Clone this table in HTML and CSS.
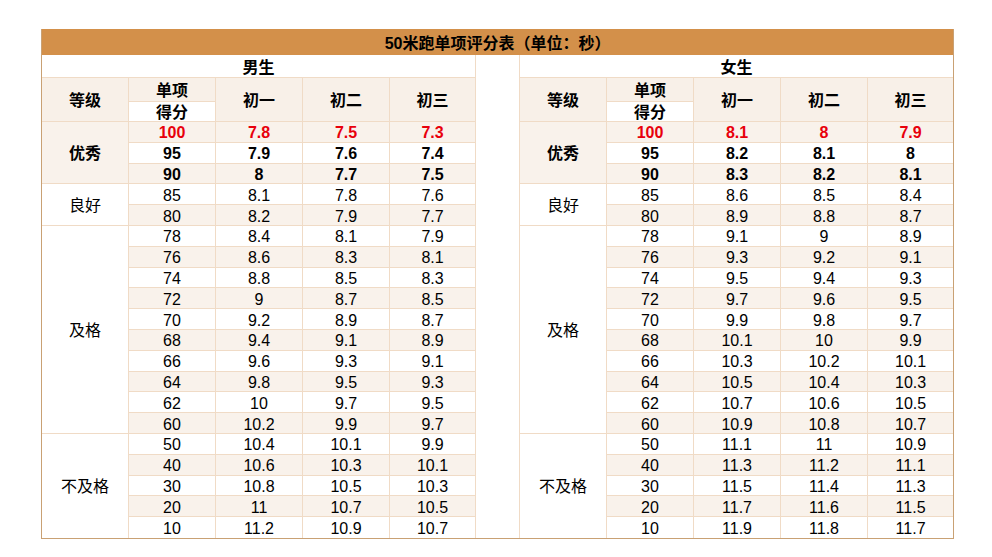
FILE: index.html
```html
<!DOCTYPE html>
<html lang="zh">
<head>
<meta charset="utf-8">
<title>50米跑单项评分表</title>
<link rel="stylesheet" href="styles.css">
</head>
<body>
<table class="score">
  <colgroup>
    <col class="c"><col class="c"><col class="c"><col class="c"><col class="c5">
    <col class="gapc">
    <col class="c"><col class="c"><col class="c"><col class="c"><col class="c6">
  </colgroup>
  <tr class="title"><th colspan="11" class="lastc">50米跑单项评分表（单位：秒）</th></tr>
  <tr class="gender"><th colspan="5">男生</th><td class="gap" rowspan="23"></td><th colspan="5" class="lastc">女生</th></tr>
  <tr class="head1">
    <th rowspan="2" class="hd">等级</th><th class="hd">单项</th><th rowspan="2" class="hd">初一</th><th rowspan="2" class="hd">初二</th><th rowspan="2" class="hd">初三</th>
    <th rowspan="2" class="hd">等级</th><th class="hd">单项</th><th rowspan="2" class="hd">初一</th><th rowspan="2" class="hd">初二</th><th rowspan="2" class="hd lastc">初三</th>
  </tr>
  <tr class="head2"><th>得分</th><th>得分</th></tr>

  <tr class="r odd top red"><th rowspan="3" class="grade best">优秀</th><td>100</td><td>7.8</td><td>7.5</td><td>7.3</td><th rowspan="3" class="grade best">优秀</th><td>100</td><td>8.1</td><td>8</td><td class="lastc">7.9</td></tr>
  <tr class="r top"><td>95</td><td>7.9</td><td>7.6</td><td>7.4</td><td>95</td><td>8.2</td><td>8.1</td><td class="lastc">8</td></tr>
  <tr class="r odd top"><td>90</td><td>8</td><td>7.7</td><td>7.5</td><td>90</td><td>8.3</td><td>8.2</td><td class="lastc">8.1</td></tr>

  <tr class="r"><th rowspan="2" class="grade">良好</th><td>85</td><td>8.1</td><td>7.8</td><td>7.6</td><th rowspan="2" class="grade">良好</th><td>85</td><td>8.6</td><td>8.5</td><td class="lastc">8.4</td></tr>
  <tr class="r odd"><td>80</td><td>8.2</td><td>7.9</td><td>7.7</td><td>80</td><td>8.9</td><td>8.8</td><td class="lastc">8.7</td></tr>

  <tr class="r"><th rowspan="10" class="grade">及格</th><td>78</td><td>8.4</td><td>8.1</td><td>7.9</td><th rowspan="10" class="grade">及格</th><td>78</td><td>9.1</td><td>9</td><td class="lastc">8.9</td></tr>
  <tr class="r odd"><td>76</td><td>8.6</td><td>8.3</td><td>8.1</td><td>76</td><td>9.3</td><td>9.2</td><td class="lastc">9.1</td></tr>
  <tr class="r"><td>74</td><td>8.8</td><td>8.5</td><td>8.3</td><td>74</td><td>9.5</td><td>9.4</td><td class="lastc">9.3</td></tr>
  <tr class="r odd"><td>72</td><td>9</td><td>8.7</td><td>8.5</td><td>72</td><td>9.7</td><td>9.6</td><td class="lastc">9.5</td></tr>
  <tr class="r"><td>70</td><td>9.2</td><td>8.9</td><td>8.7</td><td>70</td><td>9.9</td><td>9.8</td><td class="lastc">9.7</td></tr>
  <tr class="r odd"><td>68</td><td>9.4</td><td>9.1</td><td>8.9</td><td>68</td><td>10.1</td><td>10</td><td class="lastc">9.9</td></tr>
  <tr class="r"><td>66</td><td>9.6</td><td>9.3</td><td>9.1</td><td>66</td><td>10.3</td><td>10.2</td><td class="lastc">10.1</td></tr>
  <tr class="r odd"><td>64</td><td>9.8</td><td>9.5</td><td>9.3</td><td>64</td><td>10.5</td><td>10.4</td><td class="lastc">10.3</td></tr>
  <tr class="r"><td>62</td><td>10</td><td>9.7</td><td>9.5</td><td>62</td><td>10.7</td><td>10.6</td><td class="lastc">10.5</td></tr>
  <tr class="r odd"><td>60</td><td>10.2</td><td>9.9</td><td>9.7</td><td>60</td><td>10.9</td><td>10.8</td><td class="lastc">10.7</td></tr>

  <tr class="r"><th rowspan="5" class="grade lastr">不及格</th><td>50</td><td>10.4</td><td>10.1</td><td>9.9</td><th rowspan="5" class="grade lastr">不及格</th><td>50</td><td>11.1</td><td>11</td><td class="lastc">10.9</td></tr>
  <tr class="r odd"><td>40</td><td>10.6</td><td>10.3</td><td>10.1</td><td>40</td><td>11.3</td><td>11.2</td><td class="lastc">11.1</td></tr>
  <tr class="r"><td>30</td><td>10.8</td><td>10.5</td><td>10.3</td><td>30</td><td>11.5</td><td>11.4</td><td class="lastc">11.3</td></tr>
  <tr class="r odd"><td>20</td><td>11</td><td>10.7</td><td>10.5</td><td>20</td><td>11.7</td><td>11.6</td><td class="lastc">11.5</td></tr>
  <tr class="r last"><td>10</td><td>11.2</td><td>10.9</td><td>10.7</td><td>10</td><td>11.9</td><td>11.8</td><td class="lastc">11.7</td></tr>
</table>
</body>
</html>
```

FILE: styles.css
```css
html, body {
  margin: 0;
  background: #ffffff;
}

body {
  padding: 29px 0 0 41px;
  font-family: "Liberation Sans", "Noto Sans CJK SC", sans-serif;
  color: #000000;
}

.score {
  border-collapse: separate;
  border-spacing: 0;
  table-layout: fixed;
  width: 913px;
  font-size: 16px;
  border-left: 1px solid #c9a174;
  border-right: 1px solid #c9a174;
  border-bottom: 1px solid #c9a174;
}

.score col.c { width: 87px; }
.score col.c5 { width: 86px; }
.score col.c6 { width: 85px; }
.score col.gapc { width: 44px; }

.score th,
.score td {
  padding: 2px 0 0;
  text-align: center;
  vertical-align: middle;
  line-height: 17px;
  white-space: nowrap;
  overflow: hidden;
  border-right: 1px solid #f0dbc6;
  border-bottom: 1px solid #f0dbc6;
  background: #ffffff;
}

.score th { font-weight: bold; }

.score .lastc { border-right: none; }
.score .lastr,
.score .last td,
.score .gap { border-bottom: none; }

.title { height: 26px; }
.title th {
  background: #d3904a;
  border-bottom: none;
  font-size: 16px;
}

.gender { height: 23px; }
.gender th { background: #ffffff; }

.head1 { height: 24px; }
.head2 { height: 20px; }
.head1 th { background: #f8f0e8; }
.head2 th { background: #ffffff; padding-top: 1px; }

.r { height: 20.8px; }
.r td { background: #ffffff; }
.r.odd td { background: #f9f2eb; }

.top td { font-weight: bold; }
.red td { color: #e8000b; }

.score th.grade { font-weight: normal; background: #ffffff; }
.score th.grade.best { font-weight: bold; background: #f9f2eb; }
```
